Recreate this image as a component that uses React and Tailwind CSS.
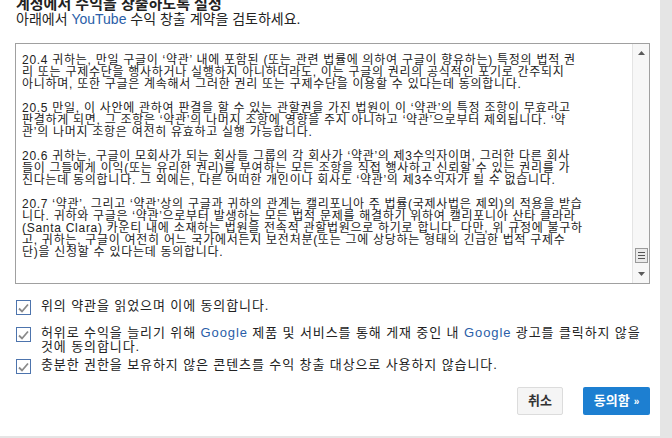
import React from "react";

const terms = [
  [
    "20.4 귀하는, 만일 구글이 ‘약관’ 내에 포함된 (또는 관련 법률에 의하여 구글이 향유하는) 특정의 법적 권",
    "리 또는 구제수단을 행사하거나 실행하지 아니하더라도, 이는 구글의 권리의 공식적인 포기로 간주되지",
    "아니하며, 또한 구글은 계속해서 그러한 권리 또는 구제수단을 이용할 수 있다는데 동의합니다.",
  ],
  [
    "20.5 만일, 이 사안에 관하여 판결을 할 수 있는 관할권을 가진 법원이 이 ‘약관’의 특정 조항이 무효라고",
    "판결하게 되면, 그 조항은 ‘약관’의 나머지 조항에 영향을 주지 아니하고 ‘약관’으로부터 제외됩니다. ‘약",
    "관’의 나머지 조항은 여전히 유효하고 실행 가능합니다.",
  ],
  [
    "20.6 귀하는, 구글이 모회사가 되는 회사들 그룹의 각 회사가 ‘약관’의 제3수익자이며, 그러한 다른 회사",
    "들이 그들에게 이익(또는 유리한 권리)를 부여하는 모든 조항을 직접 행사하고 신뢰할 수 있는 권리를 가",
    "진다는데 동의합니다. 그 외에는, 다른 어떠한 개인이나 회사도 ‘약관’의 제3수익자가 될 수 없습니다.",
  ],
  [
    "20.7 ‘약관’, 그리고 ‘약관’상의 구글과 귀하의 관계는 캘리포니아 주 법률(국제사법은 제외)의 적용을 받습",
    "니다. 귀하와 구글은 ‘약관’으로부터 발생하는 모든 법적 문제를 해결하기 위하여 캘리포니아 산타 클라라",
    "(Santa Clara) 카운티 내에 소재하는 법원을 전속적 관할법원으로 하기로 합니다. 다만, 위 규정에 불구하",
    "고, 귀하는, 구글이 여전히 어느 국가에서든지 보전처분(또는 그에 상당하는 형태의 긴급한 법적 구제수",
    "단)을 신청할 수 있다는데 동의합니다.",
  ],
];

function CheckBox() {
  return (
    <span className="mt-[1px] flex h-[15px] w-[15px] shrink-0 items-center justify-center border border-[#4d74ad] bg-white">
      <svg width="11" height="10" viewBox="0 0 11 10">
        <path d="M1 5.5 L4 8.5 L10 1.5" fill="none" stroke="#8a8a8a" strokeWidth="1.8" />
      </svg>
    </span>
  );
}

function Agreement({ children, className = "" }) {
  return (
    <label className={`flex items-start gap-[10px] ${className}`}>
      <CheckBox />
      <span className="text-[13px] leading-[14px] tracking-[0.9px] text-[#222]">{children}</span>
    </label>
  );
}

export default function App() {
  return (
    <div
      className="flex h-[438px] w-[672px] overflow-hidden bg-[#e5e5e5]"
      style={{ fontFamily: '"Liberation Sans", "Noto Sans CJK KR", sans-serif' }}
    >
      <div className="flex h-[436px] w-[660px] flex-col bg-white pl-[16px] pr-[10px]">
        <h1 className="mt-[-4px] text-[15px] font-bold leading-[16px] text-[#222]">
          계정에서 수익을 창출하도록 설정
        </h1>
        <p className="text-[14px] leading-[15px] text-[#222]">
          아래에서 <span className="text-[#2a5ea8]">YouTube</span> 수익 창출 계약을 검토하세요.
        </p>

        <div className="ml-[-1px] mt-[16px] flex h-[241px] border border-[#a0a0a0]">
          <div className="flex-1 overflow-hidden pl-[6px] pt-[10px] text-[12px] leading-[12px] tracking-[0.72px] text-[#222]">
            {terms.map((para, i) => (
              <p key={i} className="mb-[12px] whitespace-nowrap">
                {para.map((line, j) => (
                  <span key={j} className="block">
                    {line}
                  </span>
                ))}
              </p>
            ))}
          </div>
          <div className="flex w-[17px] flex-col items-center border-l border-[#e4e4e4] bg-[#f7f7f7] py-[5px]">
            <svg width="7" height="4" viewBox="0 0 7 4" className="mt-[2px]">
              <path d="M0 4 L3.5 0 L7 4 Z" fill="#5a5a5a" />
            </svg>
            <div className="flex-1" />
            <div className="flex h-[15px] w-[13px] flex-col items-center justify-center gap-[2px] border border-[#9a9a9a] bg-[#eaeaea]">
              <span className="h-px w-[7px] bg-[#555]" />
              <span className="h-px w-[7px] bg-[#555]" />
              <span className="h-px w-[7px] bg-[#555]" />
            </div>
            <svg width="7" height="4" viewBox="0 0 7 4" className="mb-[2px] mt-[9px]">
              <path d="M0 0 L3.5 4 L7 0 Z" fill="#5a5a5a" />
            </svg>
          </div>
        </div>

        <div className="mt-[15px] flex flex-col">
          <Agreement className="mb-[11px]">위의 약관을 읽었으며 이에 동의합니다.</Agreement>
          <Agreement className="mb-[4px]">
            허위로 수익을 늘리기 위해 <span className="text-[#2a5ea8]">Google</span> 제품 및 서비스를 통해 게재 중인 내{" "}
            <span className="text-[#2a5ea8]">Google</span> 광고를 클릭하지 않을
            <br />
            것에 동의합니다.
          </Agreement>
          <Agreement>충분한 권한을 보유하지 않은 콘텐츠를 수익 창출 대상으로 사용하지 않습니다.</Agreement>
        </div>

        <div className="mt-[13px] flex justify-end gap-[20px]">
          <button
            type="button"
            className="flex h-[28px] w-[46px] items-center justify-center rounded-[2px] border border-[#dcdcdc] bg-[#f5f5f5] text-[13px] font-bold text-[#333]"
          >
            취소
          </button>
          <button
            type="button"
            className="flex h-[28px] w-[67px] items-center justify-center gap-[4px] rounded-[2px] bg-[#1d7fd1] text-[13px] font-bold text-white"
          >
            동의함 <span className="text-[10px]">»</span>
          </button>
        </div>
      </div>
    </div>
  );
}
